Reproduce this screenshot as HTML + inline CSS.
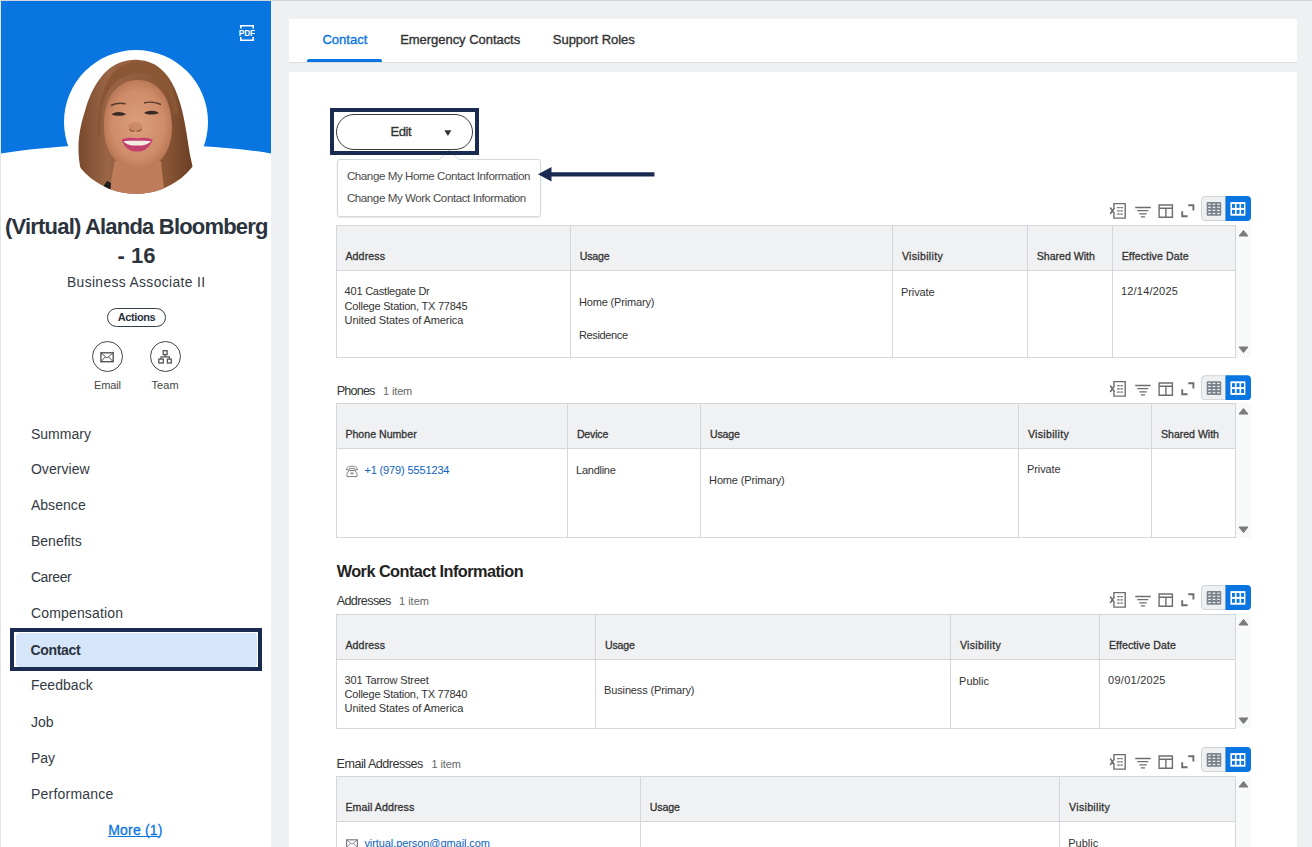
<!DOCTYPE html>
<html><head><meta charset="utf-8">
<style>
*{box-sizing:border-box;margin:0;padding:0}
html,body{width:1312px;height:847px;overflow:hidden}
body{background:#eef0f2;font-family:"Liberation Sans",sans-serif;color:#333;position:relative}
.a{position:absolute}
.tx{position:absolute;white-space:nowrap}
.hl{height:1px;background:#d4d6d9}
.vl{width:1px;background:#d4d6d9}
</style></head><body>
<div class="a" style="left:0;top:0;width:1312px;height:1px;background:#d0d7dd"></div>
<div class="a" style="left:0;top:1px;width:1px;height:846px;background:#e2e5e8"></div>
<div class="a" style="left:1px;top:1px;width:270px;height:846px;background:#fff"></div>
<svg class="a" style="left:1px;top:1px" width="270" height="160" viewBox="0 0 270 160">
  <path d="M0 0 H270 V152.5 C200 140 70 140 0 152.5 Z" fill="#0875e1"/>
</svg>
<svg class="a" style="left:238px;top:23px" width="17" height="18" viewBox="0 0 17 18">
  <path d="M2.8 5.6 V2.8 H15.2 V5.6 M2.8 14 V17.2 H15.2 V14" fill="none" stroke="#fff" stroke-width="1.6"/>
  <text x="8.8" y="12.9" font-family="Liberation Sans" font-weight="bold" font-size="8.3" fill="#fff" text-anchor="middle" letter-spacing="-0.2">PDF</text>
</svg>

  <svg class="a" style="left:63px;top:49px" width="146" height="146" viewBox="0 0 146 146">
    <defs>
      <clipPath id="cc"><circle cx="73" cy="73" r="72"/></clipPath>
      <radialGradient id="fg" cx="0.5" cy="0.5" r="0.58"><stop offset="0" stop-color="#dc9f7d"/><stop offset="0.65" stop-color="#cf8d69"/><stop offset="1" stop-color="#b06e4e"/></radialGradient>
      <linearGradient id="hg" x1="0" y1="0" x2="1" y2="0"><stop offset="0" stop-color="#7a4a2e"/><stop offset="0.25" stop-color="#9a6546"/><stop offset="0.75" stop-color="#8a5636"/><stop offset="1" stop-color="#6a3e24"/></linearGradient>
    </defs>
    <circle cx="73" cy="73" r="72" fill="#fff"/>
    <g clip-path="url(#cc)">
      <path d="M18 122 C13 100 16 80 22 62 C28 40 40 20 56 14 C64 11 70 10.5 76 11 C92 12 104 22 112 40 C120 58 123 80 126 100 C128 112 130 118 131 124 C120 140 100 146 73 146 C50 146 30 138 18 122 Z" fill="url(#hg)"/>
      <path d="M46 146 C48 132 50 120 52 112 H98 C99 120 100 132 102 146 Z" fill="#bf7d5c"/>
      <path d="M40 138 L44 132 L48 134 L47 146 L40 146 Z" fill="#1d1d1d"/>
      <path d="M41 78 C40 52 52 31 75 31 C97 31 109 52 109 78 C109 104 95 120 75 120 C55 120 41 104 41 78 Z" fill="url(#fg)"/>
      <path d="M38 86 C35 58 44 36 60 28 C70 23 82 23 92 28 C104 35 109 50 110 66 L115 64 C113 36 99 13 76 13 C50 13 34 36 35 86 Z" fill="#8a5634"/>
      
      <path d="M48 56.5 C53 54 58 53.8 62.5 54.8" fill="none" stroke="#5a3a2a" stroke-width="1.4"/>
      <path d="M81 54 C86 52.6 92 53 98 55.5" fill="none" stroke="#5a3a2a" stroke-width="1.4"/>
      <path d="M48.5 65.5 C51 62.5 59 62 63 65.5 C59 67.3 52 67.3 48.5 65.5 Z" fill="#3a2a24"/>
      <path d="M81 64 C85 61 92 61 96 64 C92 66 85 66 81 64 Z" fill="#3a2a24"/>
      <ellipse cx="72.5" cy="78" rx="7" ry="5" fill="#c07c5a" opacity="0.55"/>
      <path d="M66.5 80 C68 82.5 70 82.5 71 81.5 M74 81.5 C75 82.5 77 82.5 78.5 80" fill="none" stroke="#8a5038" stroke-width="1.3"/>
      <path d="M58.6 90.5 C63 88.3 70 88.5 74 89.2 C78 88.5 85 88.3 89.7 90.5 C87 99 81 102.6 74 102.6 C67 102.6 61 99 58.6 90.5 Z" fill="#c2406e"/>
      <path d="M60.5 92.2 C66 91.6 82 91.6 88 92.2 C85 95.6 80 96.6 74 96.6 C68 96.6 63 95.6 60.5 92.2 Z" fill="#f2ece4"/>
    </g>
  </svg>
<div class="a" style="left:107px;top:308px;width:59px;height:19px;border:1px solid #333e48;border-radius:10px"></div>
<div class="a" style="left:92px;top:341px;width:31px;height:31px;border:1px solid #444;border-radius:50%"></div>
<div class="a" style="left:150px;top:341px;width:31px;height:31px;border:1px solid #444;border-radius:50%"></div>
<svg class="a" style="left:98px;top:350px" width="18" height="14" viewBox="98 350 18 14">
  <rect x="100.9" y="352.8" width="12.3" height="8.9" fill="none" stroke="#555" stroke-width="1.4"/>
  <path d="M101 353 L107 358 L113 353 M101 361.5 L105.3 357 M113 361.5 L108.7 357" fill="none" stroke="#555" stroke-width="1"/>
</svg>
<svg class="a" style="left:156px;top:348px" width="18" height="18" viewBox="156 348 18 18">
  <rect x="163.2" y="350.7" width="3.9" height="3.9" fill="none" stroke="#555" stroke-width="1.3"/>
  <rect x="158.8" y="359.1" width="4.5" height="3.9" fill="none" stroke="#555" stroke-width="1.3"/>
  <rect x="167.4" y="359.1" width="3.9" height="3.9" fill="none" stroke="#555" stroke-width="1.3"/>
  <path d="M165.2 354.6 V356.8 M161 359.1 V356.8 H169.4 V359.1" fill="none" stroke="#555" stroke-width="1.2"/>
</svg>
<div class="a" style="left:10px;top:628px;width:252px;height:43px;border:4px solid #1a2b52"></div>
<div class="a" style="left:16px;top:632.5px;width:241px;height:34px;background:#d5e6fb;border-radius:4px"></div>

<!-- tab panel -->
<div class="a" style="left:289px;top:19px;width:1008px;height:44px;background:#fff;border-bottom:1px solid #dadde1"></div>
<div class="a" style="left:307px;top:58.6px;width:75px;height:3.6px;background:#0875e1;border-radius:2px 2px 0 0"></div>
<!-- content panel -->
<div class="a" style="left:289px;top:72px;width:1008px;height:775px;background:#fff"></div>
<div class="a" style="left:336px;top:225px;width:900.4px;height:45px;background:#f0f1f3"></div>
<div class="a hl" style="left:336px;top:225px;width:900.4px"></div>
<div class="a hl" style="left:336px;top:270px;width:900.4px"></div>
<div class="a hl" style="left:336px;top:357px;width:900.4px"></div>
<div class="a vl" style="left:336px;top:225px;height:133px"></div>
<div class="a vl" style="left:570px;top:225px;height:133px"></div>
<div class="a vl" style="left:892px;top:225px;height:133px"></div>
<div class="a vl" style="left:1027px;top:225px;height:133px"></div>
<div class="a vl" style="left:1112px;top:225px;height:133px"></div>
<div class="a vl" style="left:1235px;top:225px;height:133px"></div>
<div class="a" style="left:1236.4px;top:225px;width:15px;height:132.6px;background:#f8f9f9"></div>
<svg class="a" style="left:1238px;top:228.5px" width="11" height="8" viewBox="0 0 11 8"><path d="M1 7 L5.5 1.5 L10 7 Z" fill="#7a7a7a" stroke="#7a7a7a" stroke-width="1" stroke-linejoin="round"/></svg>
<svg class="a" style="left:1238px;top:346.1px" width="11" height="8" viewBox="0 0 11 8"><path d="M1 1 L5.5 6.5 L10 1 Z" fill="#7a7a7a" stroke="#7a7a7a" stroke-width="1" stroke-linejoin="round"/></svg>
<svg class="a" style="left:1106px;top:196px" width="148" height="26" viewBox="1106 196 148 26"><g transform="translate(0,0)"><path d="M1113.9 207.5 V203.6 H1125.2 V218.1 H1113.9 V214.3" fill="none" stroke="#6d6d6d" stroke-width="1.4"/><path d="M1117.2 207.6 H1119.7 M1120.4 207.6 H1122.8 M1117.2 210.9 H1119.7 M1120.4 210.9 H1122.8 M1117.2 214.1 H1119.7 M1120.4 214.1 H1122.8" fill="none" stroke="#6d6d6d" stroke-width="1.3"/><path d="M1110.2 207.5 L1114.6 214 M1114.6 207.5 L1110.2 214" fill="none" stroke="#6d6d6d" stroke-width="1.5"/><path d="M1135.2 207.5 H1150.7 M1137.3 210.6 H1148.3 M1139.3 213.8 H1146.7 M1140.8 216.9 H1145.1" fill="none" stroke="#6d6d6d" stroke-width="1.3"/><path d="M1159.1 205 H1172.4 V217.3 H1159.1 Z M1159.1 208.2 H1172.4 M1165.9 208.2 V217.3" fill="none" stroke="#6d6d6d" stroke-width="1.4"/><path d="M1188.3 205.2 H1193.4 V210.4 M1187.6 216.3 H1182.2 V211.2" fill="none" stroke="#6d6d6d" stroke-width="1.9"/><g transform="translate(0,0)"><path d="M1225.5 196.5 H1205.1 Q1201.5 196.5 1201.5 200.1 V216.9 Q1201.5 220.5 1205.1 220.5 H1225.5 Z" fill="#eef0f2" stroke="#cfd4d9" stroke-width="1"/><rect x="1206.7" y="202" width="14.5" height="13.7" rx="1" fill="#7b848d"/><rect x="1208.2" y="203.6" width="2.6" height="1.2" fill="#eef0f2"/><rect x="1212.7" y="203.6" width="2.6" height="1.2" fill="#eef0f2"/><rect x="1217.2" y="203.6" width="2.6" height="1.2" fill="#eef0f2"/><rect x="1208.2" y="206.70000000000002" width="2.6" height="1.2" fill="#eef0f2"/><rect x="1212.7" y="206.70000000000002" width="2.6" height="1.2" fill="#eef0f2"/><rect x="1217.2" y="206.70000000000002" width="2.6" height="1.2" fill="#eef0f2"/><rect x="1208.2" y="209.8" width="2.6" height="1.2" fill="#eef0f2"/><rect x="1212.7" y="209.8" width="2.6" height="1.2" fill="#eef0f2"/><rect x="1217.2" y="209.8" width="2.6" height="1.2" fill="#eef0f2"/><rect x="1208.2" y="212.9" width="2.6" height="1.2" fill="#eef0f2"/><rect x="1212.7" y="212.9" width="2.6" height="1.2" fill="#eef0f2"/><rect x="1217.2" y="212.9" width="2.6" height="1.2" fill="#eef0f2"/><path d="M1225.5 196 H1247 Q1251 196 1251 200 V217 Q1251 221 1247 221 H1225.5 Z" fill="#0875e1"/><rect x="1230.4" y="202.1" width="15" height="13.6" fill="#fff"/><rect x="1232.0" y="204.0" width="2.9" height="3.9" fill="#0875e1"/><rect x="1236.6" y="204.0" width="2.9" height="3.9" fill="#0875e1"/><rect x="1241.1" y="204.0" width="2.9" height="3.9" fill="#0875e1"/><rect x="1232.0" y="209.9" width="2.9" height="3.9" fill="#0875e1"/><rect x="1236.6" y="209.9" width="2.9" height="3.9" fill="#0875e1"/><rect x="1241.1" y="209.9" width="2.9" height="3.9" fill="#0875e1"/></g></g></svg>
<div class="a" style="left:336px;top:403px;width:900.4px;height:45px;background:#f0f1f3"></div>
<div class="a hl" style="left:336px;top:403px;width:900.4px"></div>
<div class="a hl" style="left:336px;top:448px;width:900.4px"></div>
<div class="a hl" style="left:336px;top:537px;width:900.4px"></div>
<div class="a vl" style="left:336px;top:403px;height:135px"></div>
<div class="a vl" style="left:567px;top:403px;height:135px"></div>
<div class="a vl" style="left:700px;top:403px;height:135px"></div>
<div class="a vl" style="left:1018px;top:403px;height:135px"></div>
<div class="a vl" style="left:1151px;top:403px;height:135px"></div>
<div class="a vl" style="left:1235px;top:403px;height:135px"></div>
<div class="a" style="left:1236.4px;top:403px;width:15px;height:134.5px;background:#f8f9f9"></div>
<svg class="a" style="left:1238px;top:406.5px" width="11" height="8" viewBox="0 0 11 8"><path d="M1 7 L5.5 1.5 L10 7 Z" fill="#7a7a7a" stroke="#7a7a7a" stroke-width="1" stroke-linejoin="round"/></svg>
<svg class="a" style="left:1238px;top:526.0px" width="11" height="8" viewBox="0 0 11 8"><path d="M1 1 L5.5 6.5 L10 1 Z" fill="#7a7a7a" stroke="#7a7a7a" stroke-width="1" stroke-linejoin="round"/></svg>
<svg class="a" style="left:1106px;top:374px" width="148" height="26" viewBox="1106 196 148 26"><g transform="translate(0,0)"><path d="M1113.9 207.5 V203.6 H1125.2 V218.1 H1113.9 V214.3" fill="none" stroke="#6d6d6d" stroke-width="1.4"/><path d="M1117.2 207.6 H1119.7 M1120.4 207.6 H1122.8 M1117.2 210.9 H1119.7 M1120.4 210.9 H1122.8 M1117.2 214.1 H1119.7 M1120.4 214.1 H1122.8" fill="none" stroke="#6d6d6d" stroke-width="1.3"/><path d="M1110.2 207.5 L1114.6 214 M1114.6 207.5 L1110.2 214" fill="none" stroke="#6d6d6d" stroke-width="1.5"/><path d="M1135.2 207.5 H1150.7 M1137.3 210.6 H1148.3 M1139.3 213.8 H1146.7 M1140.8 216.9 H1145.1" fill="none" stroke="#6d6d6d" stroke-width="1.3"/><path d="M1159.1 205 H1172.4 V217.3 H1159.1 Z M1159.1 208.2 H1172.4 M1165.9 208.2 V217.3" fill="none" stroke="#6d6d6d" stroke-width="1.4"/><path d="M1188.3 205.2 H1193.4 V210.4 M1187.6 216.3 H1182.2 V211.2" fill="none" stroke="#6d6d6d" stroke-width="1.9"/><g transform="translate(0,1.2)"><path d="M1225.5 196.5 H1205.1 Q1201.5 196.5 1201.5 200.1 V216.9 Q1201.5 220.5 1205.1 220.5 H1225.5 Z" fill="#eef0f2" stroke="#cfd4d9" stroke-width="1"/><rect x="1206.7" y="202" width="14.5" height="13.7" rx="1" fill="#7b848d"/><rect x="1208.2" y="203.6" width="2.6" height="1.2" fill="#eef0f2"/><rect x="1212.7" y="203.6" width="2.6" height="1.2" fill="#eef0f2"/><rect x="1217.2" y="203.6" width="2.6" height="1.2" fill="#eef0f2"/><rect x="1208.2" y="206.70000000000002" width="2.6" height="1.2" fill="#eef0f2"/><rect x="1212.7" y="206.70000000000002" width="2.6" height="1.2" fill="#eef0f2"/><rect x="1217.2" y="206.70000000000002" width="2.6" height="1.2" fill="#eef0f2"/><rect x="1208.2" y="209.8" width="2.6" height="1.2" fill="#eef0f2"/><rect x="1212.7" y="209.8" width="2.6" height="1.2" fill="#eef0f2"/><rect x="1217.2" y="209.8" width="2.6" height="1.2" fill="#eef0f2"/><rect x="1208.2" y="212.9" width="2.6" height="1.2" fill="#eef0f2"/><rect x="1212.7" y="212.9" width="2.6" height="1.2" fill="#eef0f2"/><rect x="1217.2" y="212.9" width="2.6" height="1.2" fill="#eef0f2"/><path d="M1225.5 196 H1247 Q1251 196 1251 200 V217 Q1251 221 1247 221 H1225.5 Z" fill="#0875e1"/><rect x="1230.4" y="202.1" width="15" height="13.6" fill="#fff"/><rect x="1232.0" y="204.0" width="2.9" height="3.9" fill="#0875e1"/><rect x="1236.6" y="204.0" width="2.9" height="3.9" fill="#0875e1"/><rect x="1241.1" y="204.0" width="2.9" height="3.9" fill="#0875e1"/><rect x="1232.0" y="209.9" width="2.9" height="3.9" fill="#0875e1"/><rect x="1236.6" y="209.9" width="2.9" height="3.9" fill="#0875e1"/><rect x="1241.1" y="209.9" width="2.9" height="3.9" fill="#0875e1"/></g></g></svg>
<div class="a" style="left:336px;top:614px;width:900.4px;height:45px;background:#f0f1f3"></div>
<div class="a hl" style="left:336px;top:614px;width:900.4px"></div>
<div class="a hl" style="left:336px;top:659px;width:900.4px"></div>
<div class="a hl" style="left:336px;top:728px;width:900.4px"></div>
<div class="a vl" style="left:336px;top:614px;height:115px"></div>
<div class="a vl" style="left:595px;top:614px;height:115px"></div>
<div class="a vl" style="left:950px;top:614px;height:115px"></div>
<div class="a vl" style="left:1099px;top:614px;height:115px"></div>
<div class="a vl" style="left:1235px;top:614px;height:115px"></div>
<div class="a" style="left:1236.4px;top:614px;width:15px;height:114.4px;background:#f8f9f9"></div>
<svg class="a" style="left:1238px;top:617.5px" width="11" height="8" viewBox="0 0 11 8"><path d="M1 7 L5.5 1.5 L10 7 Z" fill="#7a7a7a" stroke="#7a7a7a" stroke-width="1" stroke-linejoin="round"/></svg>
<svg class="a" style="left:1238px;top:716.9px" width="11" height="8" viewBox="0 0 11 8"><path d="M1 1 L5.5 6.5 L10 1 Z" fill="#7a7a7a" stroke="#7a7a7a" stroke-width="1" stroke-linejoin="round"/></svg>
<svg class="a" style="left:1106px;top:585px" width="148" height="26" viewBox="1106 196 148 26"><g transform="translate(0,0)"><path d="M1113.9 207.5 V203.6 H1125.2 V218.1 H1113.9 V214.3" fill="none" stroke="#6d6d6d" stroke-width="1.4"/><path d="M1117.2 207.6 H1119.7 M1120.4 207.6 H1122.8 M1117.2 210.9 H1119.7 M1120.4 210.9 H1122.8 M1117.2 214.1 H1119.7 M1120.4 214.1 H1122.8" fill="none" stroke="#6d6d6d" stroke-width="1.3"/><path d="M1110.2 207.5 L1114.6 214 M1114.6 207.5 L1110.2 214" fill="none" stroke="#6d6d6d" stroke-width="1.5"/><path d="M1135.2 207.5 H1150.7 M1137.3 210.6 H1148.3 M1139.3 213.8 H1146.7 M1140.8 216.9 H1145.1" fill="none" stroke="#6d6d6d" stroke-width="1.3"/><path d="M1159.1 205 H1172.4 V217.3 H1159.1 Z M1159.1 208.2 H1172.4 M1165.9 208.2 V217.3" fill="none" stroke="#6d6d6d" stroke-width="1.4"/><path d="M1188.3 205.2 H1193.4 V210.4 M1187.6 216.3 H1182.2 V211.2" fill="none" stroke="#6d6d6d" stroke-width="1.9"/><g transform="translate(0,0)"><path d="M1225.5 196.5 H1205.1 Q1201.5 196.5 1201.5 200.1 V216.9 Q1201.5 220.5 1205.1 220.5 H1225.5 Z" fill="#eef0f2" stroke="#cfd4d9" stroke-width="1"/><rect x="1206.7" y="202" width="14.5" height="13.7" rx="1" fill="#7b848d"/><rect x="1208.2" y="203.6" width="2.6" height="1.2" fill="#eef0f2"/><rect x="1212.7" y="203.6" width="2.6" height="1.2" fill="#eef0f2"/><rect x="1217.2" y="203.6" width="2.6" height="1.2" fill="#eef0f2"/><rect x="1208.2" y="206.70000000000002" width="2.6" height="1.2" fill="#eef0f2"/><rect x="1212.7" y="206.70000000000002" width="2.6" height="1.2" fill="#eef0f2"/><rect x="1217.2" y="206.70000000000002" width="2.6" height="1.2" fill="#eef0f2"/><rect x="1208.2" y="209.8" width="2.6" height="1.2" fill="#eef0f2"/><rect x="1212.7" y="209.8" width="2.6" height="1.2" fill="#eef0f2"/><rect x="1217.2" y="209.8" width="2.6" height="1.2" fill="#eef0f2"/><rect x="1208.2" y="212.9" width="2.6" height="1.2" fill="#eef0f2"/><rect x="1212.7" y="212.9" width="2.6" height="1.2" fill="#eef0f2"/><rect x="1217.2" y="212.9" width="2.6" height="1.2" fill="#eef0f2"/><path d="M1225.5 196 H1247 Q1251 196 1251 200 V217 Q1251 221 1247 221 H1225.5 Z" fill="#0875e1"/><rect x="1230.4" y="202.1" width="15" height="13.6" fill="#fff"/><rect x="1232.0" y="204.0" width="2.9" height="3.9" fill="#0875e1"/><rect x="1236.6" y="204.0" width="2.9" height="3.9" fill="#0875e1"/><rect x="1241.1" y="204.0" width="2.9" height="3.9" fill="#0875e1"/><rect x="1232.0" y="209.9" width="2.9" height="3.9" fill="#0875e1"/><rect x="1236.6" y="209.9" width="2.9" height="3.9" fill="#0875e1"/><rect x="1241.1" y="209.9" width="2.9" height="3.9" fill="#0875e1"/></g></g></svg>
<div class="a" style="left:336px;top:776px;width:900.4px;height:45px;background:#f0f1f3"></div>
<div class="a hl" style="left:336px;top:776px;width:900.4px"></div>
<div class="a hl" style="left:336px;top:821px;width:900.4px"></div>
<div class="a vl" style="left:336px;top:776px;height:73px"></div>
<div class="a vl" style="left:640px;top:776px;height:73px"></div>
<div class="a vl" style="left:1059px;top:776px;height:73px"></div>
<div class="a vl" style="left:1235px;top:776px;height:73px"></div>
<div class="a" style="left:1236.4px;top:776px;width:15px;height:72.0px;background:#f8f9f9"></div>
<svg class="a" style="left:1238px;top:779.5px" width="11" height="8" viewBox="0 0 11 8"><path d="M1 7 L5.5 1.5 L10 7 Z" fill="#7a7a7a" stroke="#7a7a7a" stroke-width="1" stroke-linejoin="round"/></svg>
<svg class="a" style="left:1106px;top:747px" width="148" height="26" viewBox="1106 196 148 26"><g transform="translate(0,0)"><path d="M1113.9 207.5 V203.6 H1125.2 V218.1 H1113.9 V214.3" fill="none" stroke="#6d6d6d" stroke-width="1.4"/><path d="M1117.2 207.6 H1119.7 M1120.4 207.6 H1122.8 M1117.2 210.9 H1119.7 M1120.4 210.9 H1122.8 M1117.2 214.1 H1119.7 M1120.4 214.1 H1122.8" fill="none" stroke="#6d6d6d" stroke-width="1.3"/><path d="M1110.2 207.5 L1114.6 214 M1114.6 207.5 L1110.2 214" fill="none" stroke="#6d6d6d" stroke-width="1.5"/><path d="M1135.2 207.5 H1150.7 M1137.3 210.6 H1148.3 M1139.3 213.8 H1146.7 M1140.8 216.9 H1145.1" fill="none" stroke="#6d6d6d" stroke-width="1.3"/><path d="M1159.1 205 H1172.4 V217.3 H1159.1 Z M1159.1 208.2 H1172.4 M1165.9 208.2 V217.3" fill="none" stroke="#6d6d6d" stroke-width="1.4"/><path d="M1188.3 205.2 H1193.4 V210.4 M1187.6 216.3 H1182.2 V211.2" fill="none" stroke="#6d6d6d" stroke-width="1.9"/><g transform="translate(0,0)"><path d="M1225.5 196.5 H1205.1 Q1201.5 196.5 1201.5 200.1 V216.9 Q1201.5 220.5 1205.1 220.5 H1225.5 Z" fill="#eef0f2" stroke="#cfd4d9" stroke-width="1"/><rect x="1206.7" y="202" width="14.5" height="13.7" rx="1" fill="#7b848d"/><rect x="1208.2" y="203.6" width="2.6" height="1.2" fill="#eef0f2"/><rect x="1212.7" y="203.6" width="2.6" height="1.2" fill="#eef0f2"/><rect x="1217.2" y="203.6" width="2.6" height="1.2" fill="#eef0f2"/><rect x="1208.2" y="206.70000000000002" width="2.6" height="1.2" fill="#eef0f2"/><rect x="1212.7" y="206.70000000000002" width="2.6" height="1.2" fill="#eef0f2"/><rect x="1217.2" y="206.70000000000002" width="2.6" height="1.2" fill="#eef0f2"/><rect x="1208.2" y="209.8" width="2.6" height="1.2" fill="#eef0f2"/><rect x="1212.7" y="209.8" width="2.6" height="1.2" fill="#eef0f2"/><rect x="1217.2" y="209.8" width="2.6" height="1.2" fill="#eef0f2"/><rect x="1208.2" y="212.9" width="2.6" height="1.2" fill="#eef0f2"/><rect x="1212.7" y="212.9" width="2.6" height="1.2" fill="#eef0f2"/><rect x="1217.2" y="212.9" width="2.6" height="1.2" fill="#eef0f2"/><path d="M1225.5 196 H1247 Q1251 196 1251 200 V217 Q1251 221 1247 221 H1225.5 Z" fill="#0875e1"/><rect x="1230.4" y="202.1" width="15" height="13.6" fill="#fff"/><rect x="1232.0" y="204.0" width="2.9" height="3.9" fill="#0875e1"/><rect x="1236.6" y="204.0" width="2.9" height="3.9" fill="#0875e1"/><rect x="1241.1" y="204.0" width="2.9" height="3.9" fill="#0875e1"/><rect x="1232.0" y="209.9" width="2.9" height="3.9" fill="#0875e1"/><rect x="1236.6" y="209.9" width="2.9" height="3.9" fill="#0875e1"/><rect x="1241.1" y="209.9" width="2.9" height="3.9" fill="#0875e1"/></g></g></svg>

<div class="a" style="left:336.5px;top:159px;width:204px;height:57.5px;background:#fff;border:1px solid #d3d8dd;border-radius:3px;box-shadow:0 1px 2px rgba(0,0,0,.10)"></div>
<svg class="a" style="left:436px;top:148px" width="26" height="14" viewBox="436 148 26 14"><path d="M437 161 L439.5 159.5 L449 150 L458.5 159.5 L461 161 Z" fill="#fff"/><path d="M437 159.5 H439.5 L449 150 L458.5 159.5 H461" fill="none" stroke="#d3d8dd" stroke-width="1"/></svg>
<!-- edit button -->
<div class="a" style="left:330px;top:108px;width:149px;height:47px;border:4px solid #1a2b52"></div>
<div class="a" style="left:336px;top:113.7px;width:137px;height:36px;border:1px solid #3b3b3b;border-radius:18px"></div>
<svg class="a" style="left:443px;top:129px" width="10" height="8" viewBox="0 0 10 8"><path d="M1.4 1.2 H8.4 L4.9 7 Z" fill="#333"/></svg>


<!-- dropdown -->

<svg class="a" style="left:536px;top:164px" width="122" height="21" viewBox="536 164 122 21">
  <path d="M538 174.3 L551.5 167 L551.5 172.2 L654.5 172.2 L654.5 176.4 L551.5 176.4 L551.5 181.6 Z" fill="#1a2b52"/>
</svg>

<div class="tx" style="left:5.00px;top:216.00px;font-size:22px;line-height:22px;font-weight:bold;color:#2b333d;letter-spacing:-0.804px;">(Virtual) Alanda Bloomberg</div>
<div class="tx" style="left:117.40px;top:245.00px;font-size:22px;line-height:22px;font-weight:bold;color:#2b333d;letter-spacing:0.026px;">- 16</div>
<div class="tx" style="left:67.00px;top:276.00px;font-size:13.8px;line-height:13.8px;font-weight:normal;color:#333a44;letter-spacing:0.381px;">Business Associate II</div>
<div class="tx" style="left:117.70px;top:312.00px;font-size:11px;line-height:11px;font-weight:bold;color:#2b333d;letter-spacing:-0.391px;">Actions</div>
<div class="tx" style="left:94.00px;top:380.00px;font-size:11px;line-height:11px;font-weight:normal;color:#444;letter-spacing:-0.129px;">Email</div>
<div class="tx" style="left:151.60px;top:380.00px;font-size:11px;line-height:11px;font-weight:normal;color:#444;letter-spacing:0.031px;">Team</div>
<div class="tx" style="left:30.90px;top:427.00px;font-size:14px;line-height:14px;font-weight:normal;color:#333a44;letter-spacing:0.016px;">Summary</div>
<div class="tx" style="left:30.90px;top:462.00px;font-size:14px;line-height:14px;font-weight:normal;color:#333a44;letter-spacing:0.050px;">Overview</div>
<div class="tx" style="left:30.90px;top:498.00px;font-size:14px;line-height:14px;font-weight:normal;color:#333a44;letter-spacing:0.050px;">Absence</div>
<div class="tx" style="left:30.90px;top:534.00px;font-size:14px;line-height:14px;font-weight:normal;color:#333a44;letter-spacing:0.029px;">Benefits</div>
<div class="tx" style="left:30.90px;top:570.00px;font-size:14px;line-height:14px;font-weight:normal;color:#333a44;letter-spacing:-0.399px;">Career</div>
<div class="tx" style="left:30.90px;top:606.00px;font-size:14px;line-height:14px;font-weight:normal;color:#333a44;letter-spacing:0.174px;">Compensation</div>
<div class="tx" style="left:30.90px;top:678.00px;font-size:14px;line-height:14px;font-weight:normal;color:#333a44;letter-spacing:0.050px;">Feedback</div>
<div class="tx" style="left:30.90px;top:715.00px;font-size:14px;line-height:14px;font-weight:normal;color:#333a44;letter-spacing:0.050px;">Job</div>
<div class="tx" style="left:30.90px;top:751.00px;font-size:14px;line-height:14px;font-weight:normal;color:#333a44;letter-spacing:0.050px;">Pay</div>
<div class="tx" style="left:30.90px;top:787.00px;font-size:14px;line-height:14px;font-weight:normal;color:#333a44;letter-spacing:0.234px;">Performance</div>
<div class="tx" style="left:30.60px;top:643.00px;font-size:14px;line-height:14px;font-weight:bold;color:#2b333d;letter-spacing:-0.354px;">Contact</div>
<div class="tx" style="left:108.20px;top:823.00px;font-size:14px;line-height:14px;font-weight:normal;color:#0875e1;letter-spacing:0.199px;-webkit-text-stroke:0.3px #0875e1">More (1)</div>
<div class="tx" style="left:322.40px;top:33.00px;font-size:13px;line-height:13px;font-weight:normal;color:#0875e1;letter-spacing:0.031px;-webkit-text-stroke:0.35px #0875e1">Contact</div>
<div class="tx" style="left:400.20px;top:33.00px;font-size:13px;line-height:13px;font-weight:normal;color:#333;letter-spacing:-0.040px;-webkit-text-stroke:0.35px #333">Emergency Contacts</div>
<div class="tx" style="left:552.80px;top:33.00px;font-size:13px;line-height:13px;font-weight:normal;color:#333;letter-spacing:-0.033px;-webkit-text-stroke:0.35px #333">Support Roles</div>
<div class="tx" style="left:390.60px;top:125.00px;font-size:13px;line-height:13px;font-weight:normal;color:#333;letter-spacing:-0.469px;-webkit-text-stroke:0.3px #333">Edit</div>
<div class="tx" style="left:346.90px;top:170.00px;font-size:11.6px;line-height:11.6px;font-weight:normal;color:#4a4a4a;letter-spacing:-0.432px;">Change My Home Contact Information</div>
<div class="tx" style="left:346.90px;top:192.00px;font-size:11.6px;line-height:11.6px;font-weight:normal;color:#4a4a4a;letter-spacing:-0.435px;">Change My Work Contact Information</div>
<div class="tx" style="left:336.70px;top:385.00px;font-size:12.6px;line-height:12.6px;font-weight:normal;color:#333;letter-spacing:-0.804px;">Phones</div>
<div class="tx" style="left:383.00px;top:386.00px;font-size:11px;line-height:11px;font-weight:normal;color:#666;letter-spacing:-0.134px;">1 item</div>
<div class="tx" style="left:336.70px;top:563.00px;font-size:16.3px;line-height:16.3px;font-weight:bold;color:#222;letter-spacing:-0.548px;">Work Contact Information</div>
<div class="tx" style="left:336.70px;top:595.00px;font-size:12.6px;line-height:12.6px;font-weight:normal;color:#333;letter-spacing:-0.614px;">Addresses</div>
<div class="tx" style="left:399.10px;top:596.00px;font-size:11px;line-height:11px;font-weight:normal;color:#666;letter-spacing:-0.034px;">1 item</div>
<div class="tx" style="left:336.60px;top:758.00px;font-size:12.6px;line-height:12.6px;font-weight:normal;color:#333;letter-spacing:-0.500px;">Email Addresses</div>
<div class="tx" style="left:431.60px;top:759.00px;font-size:11px;line-height:11px;font-weight:normal;color:#666;letter-spacing:-0.114px;">1 item</div>
<div class="tx" style="left:345.40px;top:251.00px;font-size:10.6px;line-height:10.6px;font-weight:normal;color:#333;letter-spacing:0.138px;-webkit-text-stroke:0.3px #333">Address</div>
<div class="tx" style="left:579.70px;top:251.00px;font-size:10.6px;line-height:10.6px;font-weight:normal;color:#333;letter-spacing:-0.156px;-webkit-text-stroke:0.3px #333">Usage</div>
<div class="tx" style="left:901.90px;top:251.00px;font-size:10.6px;line-height:10.6px;font-weight:normal;color:#333;letter-spacing:0.302px;-webkit-text-stroke:0.3px #333">Visibility</div>
<div class="tx" style="left:1036.80px;top:251.00px;font-size:10.6px;line-height:10.6px;font-weight:normal;color:#333;letter-spacing:-0.030px;-webkit-text-stroke:0.3px #333">Shared With</div>
<div class="tx" style="left:1121.70px;top:251.00px;font-size:10.6px;line-height:10.6px;font-weight:normal;color:#333;letter-spacing:0.095px;-webkit-text-stroke:0.3px #333">Effective Date</div>
<div class="tx" style="left:344.60px;top:286.00px;font-size:11px;line-height:11px;font-weight:normal;color:#333;letter-spacing:-0.217px;">401 Castlegate Dr</div>
<div class="tx" style="left:344.60px;top:301.00px;font-size:11px;line-height:11px;font-weight:normal;color:#333;letter-spacing:-0.217px;">College Station, TX 77845</div>
<div class="tx" style="left:344.60px;top:315.00px;font-size:11px;line-height:11px;font-weight:normal;color:#333;letter-spacing:-0.103px;">United States of America</div>
<div class="tx" style="left:578.90px;top:297.00px;font-size:11px;line-height:11px;font-weight:normal;color:#333;letter-spacing:-0.156px;">Home (Primary)</div>
<div class="tx" style="left:578.90px;top:330.00px;font-size:11px;line-height:11px;font-weight:normal;color:#333;letter-spacing:-0.348px;">Residence</div>
<div class="tx" style="left:901.10px;top:287.00px;font-size:11px;line-height:11px;font-weight:normal;color:#333;letter-spacing:-0.125px;">Private</div>
<div class="tx" style="left:1120.90px;top:286.00px;font-size:11px;line-height:11px;font-weight:normal;color:#333;letter-spacing:0.215px;">12/14/2025</div>
<div class="tx" style="left:345.40px;top:429.00px;font-size:10.6px;line-height:10.6px;font-weight:normal;color:#333;letter-spacing:0.003px;-webkit-text-stroke:0.3px #333">Phone Number</div>
<div class="tx" style="left:576.90px;top:429.00px;font-size:10.6px;line-height:10.6px;font-weight:normal;color:#333;letter-spacing:-0.198px;-webkit-text-stroke:0.3px #333">Device</div>
<div class="tx" style="left:709.90px;top:429.00px;font-size:10.6px;line-height:10.6px;font-weight:normal;color:#333;letter-spacing:-0.156px;-webkit-text-stroke:0.3px #333">Usage</div>
<div class="tx" style="left:1027.90px;top:429.00px;font-size:10.6px;line-height:10.6px;font-weight:normal;color:#333;letter-spacing:0.302px;-webkit-text-stroke:0.3px #333">Visibility</div>
<div class="tx" style="left:1161.00px;top:429.00px;font-size:10.6px;line-height:10.6px;font-weight:normal;color:#333;letter-spacing:-0.030px;-webkit-text-stroke:0.3px #333">Shared With</div>
<div class="tx" style="left:364.40px;top:465.00px;font-size:11px;line-height:11px;font-weight:normal;color:#0b63c1;letter-spacing:-0.138px;">+1 (979) 5551234</div>
<div class="tx" style="left:576.10px;top:465.00px;font-size:11px;line-height:11px;font-weight:normal;color:#333;letter-spacing:-0.271px;">Landline</div>
<div class="tx" style="left:709.10px;top:475.00px;font-size:11px;line-height:11px;font-weight:normal;color:#333;letter-spacing:-0.156px;">Home (Primary)</div>
<div class="tx" style="left:1027.10px;top:464.00px;font-size:11px;line-height:11px;font-weight:normal;color:#333;letter-spacing:-0.125px;">Private</div>
<div class="tx" style="left:345.40px;top:640.00px;font-size:10.6px;line-height:10.6px;font-weight:normal;color:#333;letter-spacing:0.138px;-webkit-text-stroke:0.3px #333">Address</div>
<div class="tx" style="left:604.90px;top:640.00px;font-size:10.6px;line-height:10.6px;font-weight:normal;color:#333;letter-spacing:-0.156px;-webkit-text-stroke:0.3px #333">Usage</div>
<div class="tx" style="left:959.90px;top:640.00px;font-size:10.6px;line-height:10.6px;font-weight:normal;color:#333;letter-spacing:0.302px;-webkit-text-stroke:0.3px #333">Visibility</div>
<div class="tx" style="left:1108.90px;top:640.00px;font-size:10.6px;line-height:10.6px;font-weight:normal;color:#333;letter-spacing:0.095px;-webkit-text-stroke:0.3px #333">Effective Date</div>
<div class="tx" style="left:344.60px;top:675.00px;font-size:11px;line-height:11px;font-weight:normal;color:#333;letter-spacing:-0.145px;">301 Tarrow Street</div>
<div class="tx" style="left:344.60px;top:689.00px;font-size:11px;line-height:11px;font-weight:normal;color:#333;letter-spacing:-0.230px;">College Station, TX 77840</div>
<div class="tx" style="left:344.60px;top:703.00px;font-size:11px;line-height:11px;font-weight:normal;color:#333;letter-spacing:-0.103px;">United States of America</div>
<div class="tx" style="left:604.10px;top:685.00px;font-size:11px;line-height:11px;font-weight:normal;color:#333;letter-spacing:-0.147px;">Business (Primary)</div>
<div class="tx" style="left:959.10px;top:676.00px;font-size:11px;line-height:11px;font-weight:normal;color:#333;letter-spacing:-0.014px;">Public</div>
<div class="tx" style="left:1108.10px;top:675.00px;font-size:11px;line-height:11px;font-weight:normal;color:#333;letter-spacing:0.260px;">09/01/2025</div>
<div class="tx" style="left:345.40px;top:802.00px;font-size:10.6px;line-height:10.6px;font-weight:normal;color:#333;letter-spacing:0.098px;-webkit-text-stroke:0.3px #333">Email Address</div>
<div class="tx" style="left:649.80px;top:802.00px;font-size:10.6px;line-height:10.6px;font-weight:normal;color:#333;letter-spacing:-0.156px;-webkit-text-stroke:0.3px #333">Usage</div>
<div class="tx" style="left:1069.10px;top:802.00px;font-size:10.6px;line-height:10.6px;font-weight:normal;color:#333;letter-spacing:0.302px;-webkit-text-stroke:0.3px #333">Visibility</div>
<div class="tx" style="left:364.40px;top:838.00px;font-size:11px;line-height:11px;font-weight:normal;color:#0b63c1;letter-spacing:-0.075px;">virtual.person@gmail.com</div>
<div class="tx" style="left:1068.30px;top:838.00px;font-size:11px;line-height:11px;font-weight:normal;color:#333;letter-spacing:-0.014px;">Public</div>
<div class="a" style="left:108px;top:836px;width:51px;height:1.2px;background:#0875e1"></div>
<svg class="a" style="left:345px;top:465px" width="14" height="13" viewBox="345 465 14 13">
  <path d="M346.6 470 C346.4 467.5 348.5 466.3 352 466.3 C355.5 466.3 357.6 467.5 357.4 470 L355 470 L354.6 468.6 H349.4 L349 470 Z" fill="none" stroke="#7a7f85" stroke-width="1"/>
  <path d="M349.3 470.5 L347 473.5 V476.6 H357 V473.5 L354.7 470.5 Z" fill="none" stroke="#7a7f85" stroke-width="1"/>
  <rect x="350.5" y="472.6" width="3" height="1.6" fill="#7a7f85"/>
</svg>
<svg class="a" style="left:345px;top:838px" width="14" height="10" viewBox="345 838 14 10">
  <rect x="346.6" y="839.8" width="10.8" height="8" fill="none" stroke="#7a7f85" stroke-width="1.2"/>
  <path d="M346.8 840 L352 844.3 L357.2 840 M346.8 847.6 L350.5 843.6 M357.2 847.6 L353.5 843.6" fill="none" stroke="#7a7f85" stroke-width="0.9"/>
</svg>
</body></html>
